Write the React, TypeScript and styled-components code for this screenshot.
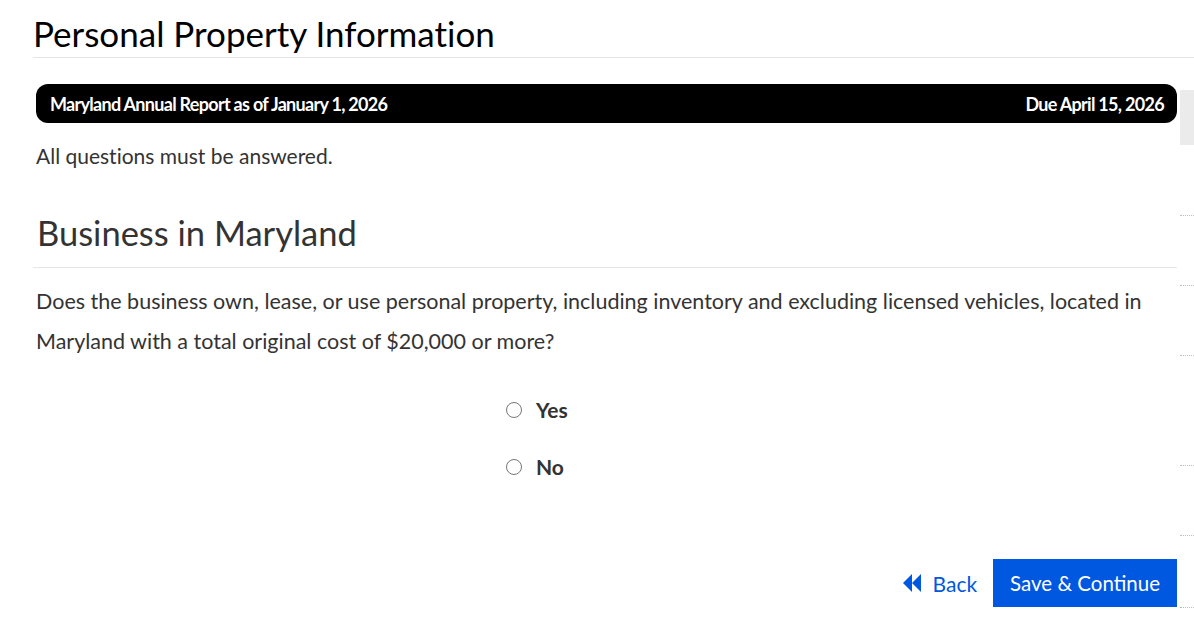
import React from "react";
import styled, { createGlobalStyle } from "styled-components";

const Global = createGlobalStyle`
  html, body { margin: 0; padding: 0; background: #fff; }
  body {
    font-family: Lato, "Noto Sans", sans-serif;
    color: #333;
    overflow: hidden;
    font-variant-ligatures: none;
  }
  * { box-sizing: border-box; }
`;

const Page = styled.div`
  display: flex;
  width: 1194px;
  height: 636px;
`;

const Main = styled.div`
  flex: 1;
  display: flex;
  flex-direction: column;
  padding-left: 33px;
`;

const SideStrip = styled.div`
  width: 14px;
  margin-left: 3px;
  position: relative;
`;

const Thumb = styled.div`
  position: absolute;
  left: 0;
  top: 90px;
  width: 14px;
  height: 55px;
  background: #ebebeb;
`;

const Dots = styled.div<{ $top: number }>`
  position: absolute;
  left: 0;
  top: ${(p) => p.$top}px;
  width: 14px;
  border-top: 1px dotted #bdbdbd;
`;

const Title = styled.h1`
  margin: 0 -17px 0 0;
  padding-top: 10px;
  font-size: 35px;
  font-weight: 400;
  color: #000;
  line-height: 46px;
  height: 58px;
  border-bottom: 1px solid #e5e5e5;
`;

const Content = styled.div`
  padding-left: 3px;
  display: flex;
  flex-direction: column;
`;

const Banner = styled.div`
  margin-top: 26px;
  height: 39px;
  background: #000;
  border-radius: 12px;
  display: flex;
  align-items: center;
  justify-content: space-between;
  padding: 0 13px 0 14px;
  color: #fff;
  font-weight: 700;
  font-size: 18px;
  letter-spacing: -0.7px;
`;

const Note = styled.p`
  margin: 20px 0 0;
  font-size: 21px;
  line-height: 26px;
`;

const SectionTitle = styled.h2`
  margin: 42px 0 0 -3px;
  padding: 0 0 12px 4px;
  font-size: 34.5px;
  font-weight: 400;
  line-height: 44px;
  border-bottom: 1px solid #e5e5e5;
`;

const Question = styled.p`
  margin: 13px 0 0;
  font-size: 21.5px;
  line-height: 40px;
`;

const Options = styled.div`
  display: flex;
  flex-direction: column;
  align-items: flex-start;
  gap: 31px;
  margin-top: 36px;
  padding-left: 470px;
`;

const Option = styled.label`
  display: flex;
  align-items: center;
  gap: 14px;
  font-size: 21px;
  font-weight: 700;
  line-height: 26px;
  color: #333;
`;

const Radio = styled.input.attrs({ type: "radio" })`
  appearance: none;
  margin: 0;
  width: 16px;
  height: 16px;
  border: 1px solid #767676;
  border-radius: 50%;
  background: #fff;
`;

const Actions = styled.div`
  display: flex;
  justify-content: flex-end;
  align-items: center;
  margin-top: 79px;
  gap: 16px;
`;

const BackLink = styled.a`
  display: flex;
  align-items: center;
  gap: 11px;
  color: #0057e0;
  font-size: 21px;
  text-decoration: none;
`;

const PrimaryButton = styled.button`
  height: 48px;
  padding: 0 17px;
  background: #0057e0;
  color: #fff;
  border: none;
  font-family: inherit;
  font-size: 20.5px;
  cursor: pointer;
`;

const BackIcon = () => (
  <svg width="19" height="18" viewBox="0 0 19 18">
    <polygon points="0,9 9,0 9,18" fill="#0057e0" />
    <polygon points="9,9 18,0 18,18" fill="#0057e0" />
  </svg>
);

export default function App() {
  return (
    <Page>
      <Global />
      <Main>
        <Title>Personal Property Information</Title>
        <Content>
          <Banner>
            <span>Maryland Annual Report as of January 1, 2026</span>
            <span>Due April 15, 2026</span>
          </Banner>
          <Note>All questions must be answered.</Note>
          <SectionTitle>Business in Maryland</SectionTitle>
          <Question>
            Does the business own, lease, or use personal property, including inventory and excluding licensed
            vehicles, located in Maryland with a total original cost of $20,000 or more?
          </Question>
          <Options>
            <Option>
              <Radio name="pp" />
              Yes
            </Option>
            <Option>
              <Radio name="pp" />
              No
            </Option>
          </Options>
          <Actions>
            <BackLink href="#">
              <BackIcon />
              Back
            </BackLink>
            <PrimaryButton>Save &amp; Continue</PrimaryButton>
          </Actions>
        </Content>
      </Main>
      <SideStrip>
        <Thumb />
        {[215, 285, 355, 465, 535, 607].map((t) => (
          <Dots key={t} $top={t} />
        ))}
      </SideStrip>
    </Page>
  );
}
